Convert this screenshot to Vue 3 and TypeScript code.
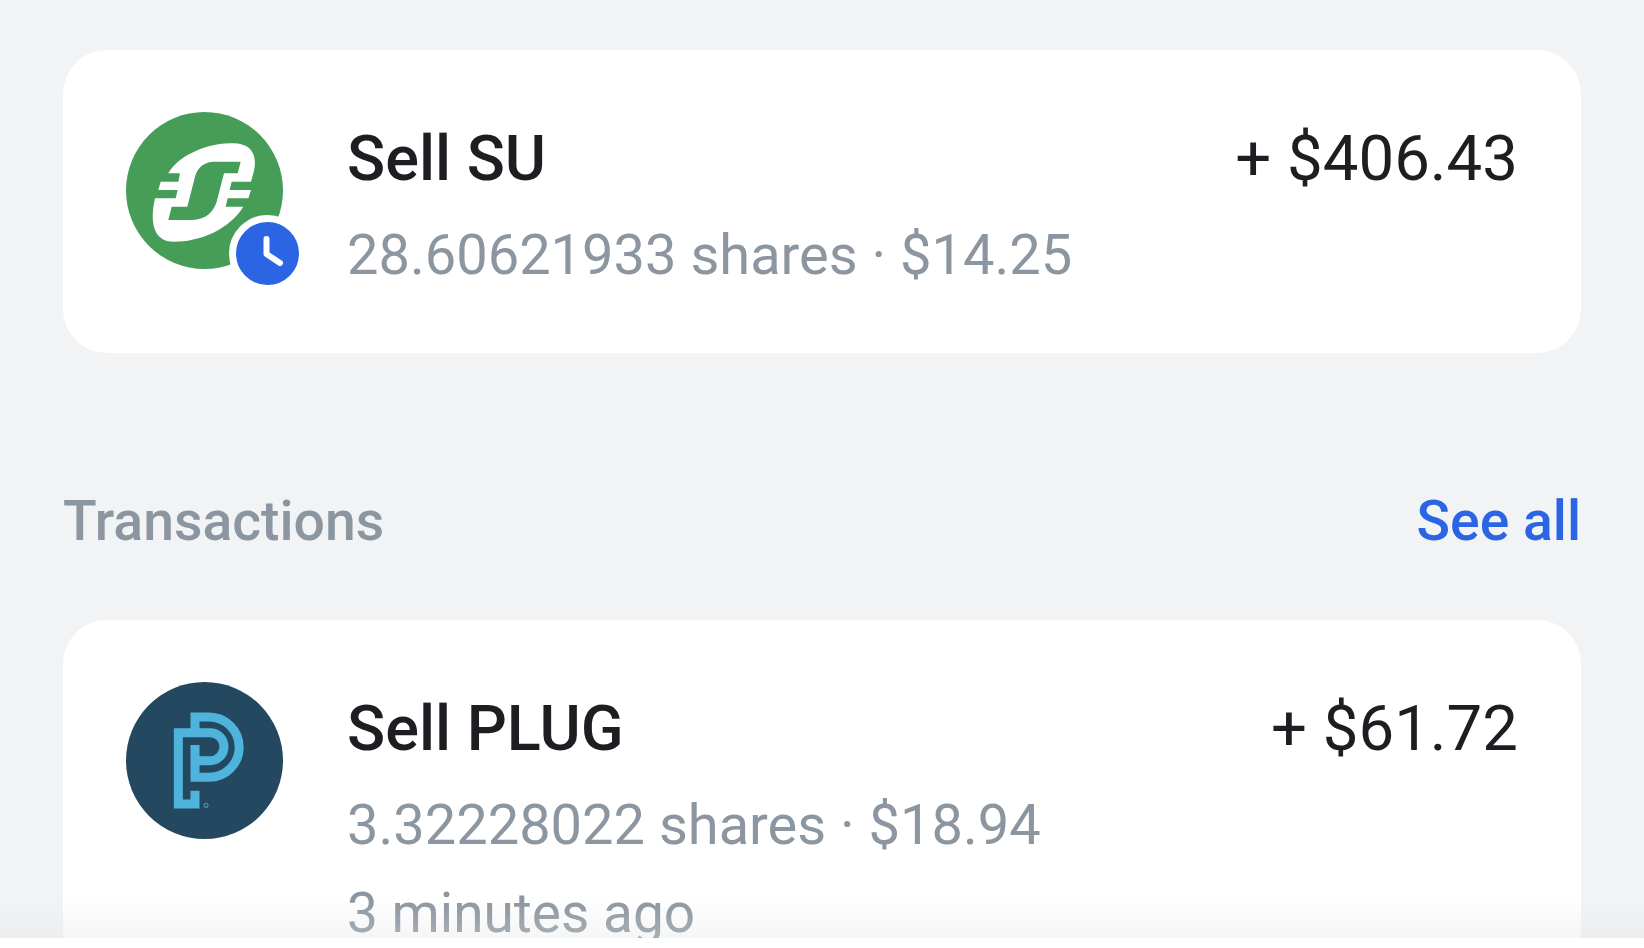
<script setup lang="ts">
interface Tx {
  title: string;
  amount: string;
  lines: string[];
  logo: "su" | "plug";
  pending: boolean;
}
const pendingTx: Tx = {
  title: "Sell SU",
  amount: "+ $406.43",
  lines: ["28.60621933 shares · $14.25"],
  logo: "su",
  pending: true,
};
const recentTx: Tx = {
  title: "Sell PLUG",
  amount: "+ $61.72",
  lines: ["3.32228022 shares · $18.94", "3 minutes ago"],
  logo: "plug",
  pending: false,
};
const rows: { tx: Tx; header: boolean }[] = [
  { tx: pendingTx, header: false },
  { tx: recentTx, header: true },
];
</script>

<template>
  <div class="screen">
    <main class="scroll">
      <template v-for="row in rows" :key="row.tx.title">
        <div v-if="row.header" class="section-head">
          <span class="section-title">Transactions</span>
          <span class="see-all">See all</span>
        </div>
        <article class="card">
          <div class="avatar">
            <svg v-if="row.tx.logo === 'su'" class="logo" viewBox="-57 -54 471 471">
              <circle cx="178.5" cy="181.5" r="235.5" fill="#459d58" />
              <path
                fill="#fff"
                d="M70 130C95 85 170 42 255 40C320 36 340 75 325 130L318 155L260 155L254 180L318 180L310 205L248 205L242 230L295 230C255 295 170 335 85 335C30 335 12 285 30 205L92 205L98 180L40 180L47 155L100 155L105 130Z"
              />
              <path
                fill="#459d58"
                d="M287 95L205 95C170 97 155 120 150 140L127 230L80 230L70 270L140 270C185 268 205 245 215 215L237 130L278 130Z"
              />
            </svg>
            <svg v-else class="logo" viewBox="78 126 471 471">
              <circle cx="313.5" cy="361.5" r="235.5" fill="#24485f" />
              <g fill="none" stroke="#4fb4dc" stroke-width="27">
                <path d="M285 452V492H235V278H330A42 42 0 0 1 330 362H285" />
                <path d="M285 278V231H327A90.5 90.5 0 0 1 327 412H285V315" />
              </g>
              <circle cx="318" cy="496" r="6" fill="none" stroke="#4fb4dc" stroke-opacity="0.7" stroke-width="3.5" />
            </svg>
            <span v-if="row.tx.pending" class="badge">
              <svg class="clock" viewBox="0 0 63 63">
                <path
                  d="M30.5 17V32L44 41"
                  fill="none"
                  stroke="#fff"
                  stroke-width="6"
                  stroke-linecap="round"
                  stroke-linejoin="round"
                />
              </svg>
            </span>
          </div>
          <div class="body">
            <div class="top-line">
              <span class="title">{{ row.tx.title }}</span>
              <span class="amount">{{ row.tx.amount }}</span>
            </div>
            <div class="sub-lines">
              <div v-for="line in row.tx.lines" :key="line" class="sub">{{ line }}</div>
            </div>
          </div>
        </article>
      </template>
      <div class="fade"></div>
    </main>
  </div>
</template>

<style>
html,
body {
  margin: 0;
  background: #fff;
}
</style>

<style scoped>
.screen {
  width: 1644px;
  height: 948px;
  background: #fff;
  font-family: Roboto, "Liberation Sans", sans-serif;
  overflow: hidden;
}
.scroll {
  position: relative;
  height: 938px;
  box-sizing: border-box;
  padding: 50px 63px 0;
  background: #f2f3f5;
  overflow: hidden;
}
.card {
  display: flex;
  gap: 64px;
  width: 1518px;
  box-sizing: border-box;
  padding: 62px 63px 54px 63px;
  background: #fff;
  border-radius: 44px;
}
.avatar {
  position: relative;
  flex: none;
  width: 157px;
  height: 157px;
}
.logo {
  display: block;
  width: 157px;
  height: 157px;
}
.badge {
  position: absolute;
  left: 103px;
  top: 103px;
  width: 63px;
  height: 63px;
  display: block;
  background: #2b65e3;
  border: 7px solid #fff;
  border-radius: 50%;
}
.clock {
  display: block;
  width: 63px;
  height: 63px;
}
.body {
  flex: 1;
  min-width: 0;
}
.top-line {
  display: flex;
  justify-content: space-between;
  line-height: 90px;
  height: 90px;
  padding-top: 2px;
  margin-bottom: 7px;
}
.title {
  font-size: 63px;
  font-weight: 500;
  color: #1c1e21;
}
.amount {
  font-size: 63.5px;
  font-weight: 400;
  color: #1c1e21;
}
.sub {
  font-size: 56px;
  line-height: 88px;
  color: #8c96a0;
}
.sub + .sub {
  font-size: 55px;
}
.section-head {
  display: flex;
  justify-content: space-between;
  width: 1518px;
  height: 60px;
  line-height: 60px;
  margin: 139px 0 68px;
  font-size: 55.3px;
  font-weight: 500;
}
.section-title {
  color: #8c96a0;
}
.see-all {
  color: #2b65e3;
}
.fade {
  position: absolute;
  left: 0;
  right: 0;
  bottom: 0;
  height: 40px;
  background: linear-gradient(to bottom, rgba(225, 226, 228, 0), rgba(225, 226, 228, 0.32));
}
</style>
